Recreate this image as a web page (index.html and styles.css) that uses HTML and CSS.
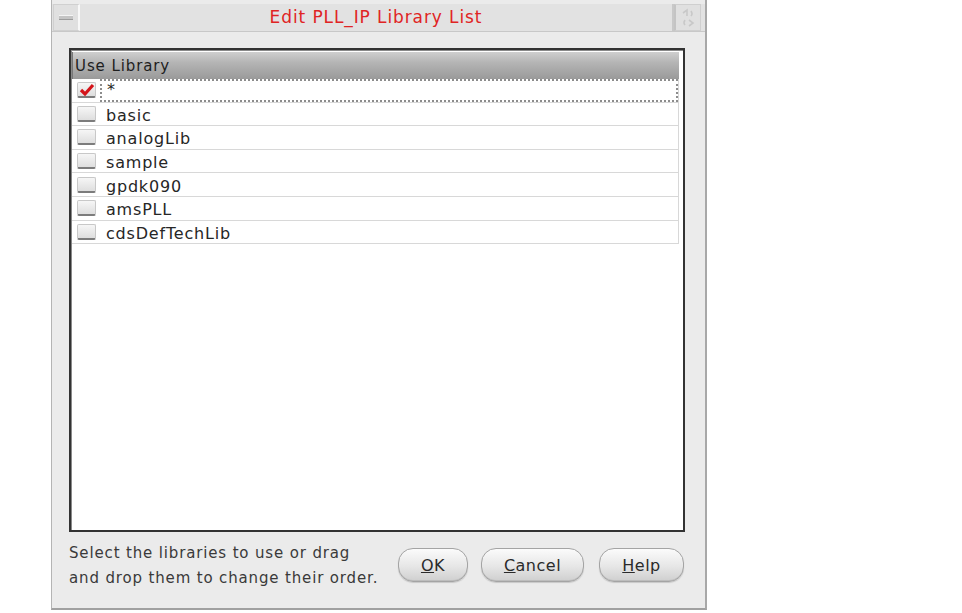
FILE: index.html
```html
<!DOCTYPE html>
<html>
<head>
<meta charset="utf-8">
<link rel="stylesheet" href="styles.css">
</head>
<body>
<div class="dialog">
  <div class="titlebar">
    <div class="tb-btn tb-left"><span class="dash"></span></div>
    <div class="title">Edit PLL_IP Library List</div>
    <div class="tb-btn tb-right">
      <svg width="16" height="20" viewBox="0 0 16 20"><path d="M3 5 L7 2 L7 8 M9 12 L13 15 L9 18" fill="none" stroke="#c8c8c8" stroke-width="1.6"/><path d="M11 3 Q13 6 11 8 M5 12 Q3 15 5 17" fill="none" stroke="#c8c8c8" stroke-width="1.6"/></svg>
    </div>
  </div>
  <div class="content">
    <div class="listbox">
      <div class="header">Use Library</div>
      <div class="row">
        <span class="cb checked"><svg width="16" height="14" viewBox="0 0 16 14"><path d="M2 7 L6 11 L14 2" fill="none" stroke="#d4141a" stroke-width="3.2" stroke-linejoin="miter"/></svg></span>
        <span class="name focus">*</span>
      </div>
      <div class="row"><span class="cb"></span><span class="name">basic</span></div>
      <div class="row"><span class="cb"></span><span class="name">analogLib</span></div>
      <div class="row"><span class="cb"></span><span class="name">sample</span></div>
      <div class="row"><span class="cb"></span><span class="name">gpdk090</span></div>
      <div class="row"><span class="cb"></span><span class="name">amsPLL</span></div>
      <div class="row"><span class="cb"></span><span class="name">cdsDefTechLib</span></div>
    </div>
    <div class="footer">
      <div class="hint">Select the libraries to use or drag<br>and drop them to change their order.</div>
      <div class="buttons">
        <button class="btn btn-ok"><u>O</u>K</button>
        <button class="btn btn-cancel"><u>C</u>ancel</button>
        <button class="btn btn-help"><u>H</u>elp</button>
      </div>
    </div>
  </div>
</div>
</body>
</html>
```

FILE: styles.css
```css
html, body {
  margin: 0;
  padding: 0;
  background: #ffffff;
  font-family: "DejaVu Sans", "Liberation Sans", sans-serif;
}
.dialog {
  margin-left: 51px;
  width: 653px;
  height: 608px;
  background: #ebebeb;
  border-left: 1px solid #b4b4b4;
  border-right: 2px solid #a8a8a8;
  border-bottom: 2px solid #a0a0a0;
  display: flex;
  flex-direction: column;
}
.titlebar {
  margin-top: 4px;
  height: 27px;
  display: flex;
  border-bottom: 1px solid #c8c8c8;
  background: #e2e2e2;
}
.tb-btn {
  width: 27px;
  height: 27px;
  box-sizing: border-box;
  background: #e0e0e0;
  display: flex;
  align-items: center;
  justify-content: center;
}
.tb-left {
  margin-left: 1px;
  border: 1px solid #d0d0d0;
  border-right: 2px solid #f8f8f8;
}
.tb-right {
  margin-right: 4px;
  border: 1px solid #cfcfcf;
  border-left: 2px solid #c4c4c4;
}
.dash {
  width: 14px;
  height: 3px;
  background: #c4c4c4;
  border-top: 1px solid #f4f4f4;
  border-bottom: 1px solid #9c9c9c;
}
.title {
  flex: 1;
  text-align: center;
  color: #e02424;
  font-size: 17px;
  letter-spacing: 0.9px;
  line-height: 27px;
  background: #e2e2e2;
  border-right: 2px solid #c8c8c8;
}
.content {
  flex: 1;
  display: flex;
  flex-direction: column;
  padding: 16px 20px 0 17px;
}
.listbox {
  height: 478px;
  background: #ffffff;
  border: 2px solid #333333;
  padding: 2px 4px 0 1px;
  box-shadow: inset 1px 1px 0 #8a8a8a;
}
.header {
  height: 27px;
  box-sizing: border-box;
  padding-left: 2px;
  padding-top: 1px;
  font-size: 15px;
  letter-spacing: 0.9px;
  line-height: 26px;
  color: #1e1e1e;
  background: linear-gradient(#cfcfcf, #b4b4b4 40%, #9a9a9a);
  border-left: 1px solid #777;
}
.row {
  height: 23.6px;
  box-sizing: border-box;
  display: flex;
  align-items: center;
  border-bottom: 1px solid #d8d8d8;
  border-right: 1px solid #d8d8d8;
}
.cb {
  width: 19px;
  height: 16px;
  margin-left: 5px;
  margin-right: 9px;
  box-sizing: border-box;
  background: linear-gradient(#f6f6f6, #dedede);
  border: 1px solid #c8c8c8;
  border-bottom: 2px solid #7c7c7c;
  border-radius: 2px;
  display: flex;
  align-items: center;
  justify-content: center;
}
.name {
  font-size: 16px;
  letter-spacing: 0.8px;
  color: #262626;
  padding-left: 1px;
  padding-top: 3px;
}
.name.focus {
  flex: 1;
  align-self: stretch;
  margin-left: -5px;
  padding-left: 5px;
  padding-top: 0;
  border: 2px dotted #8c8c8c;
  line-height: 17px;
}
.footer {
  display: flex;
  align-items: center;
  margin-top: 7px;
}
.hint {
  font-size: 15px;
  letter-spacing: 0.85px;
  line-height: 25px;
  color: #3a3a3a;
  white-space: nowrap;
  margin-top: 2px;
}
.buttons {
  display: flex;
  margin-left: auto;
  padding-right: 1px;
}
.btn {
  height: 34px;
  font-family: "DejaVu Sans", "Liberation Sans", sans-serif;
  font-size: 16px;
  letter-spacing: 0.5px;
  color: #2a2a2a;
  border: 1px solid #a4a4a4;
  border-radius: 15px;
  background: linear-gradient(#fbfbfb, #e6e6e6 55%, #cfcfcf);
  box-shadow: inset 0 -1px 0 #bdbdbd, 0 1px 1px #c8c8c8;
  padding: 0;
}
.btn-ok { width: 70px; }
.btn-cancel { width: 103px; margin-left: 13px; }
.btn-help { width: 85px; margin-left: 15px; }
```
